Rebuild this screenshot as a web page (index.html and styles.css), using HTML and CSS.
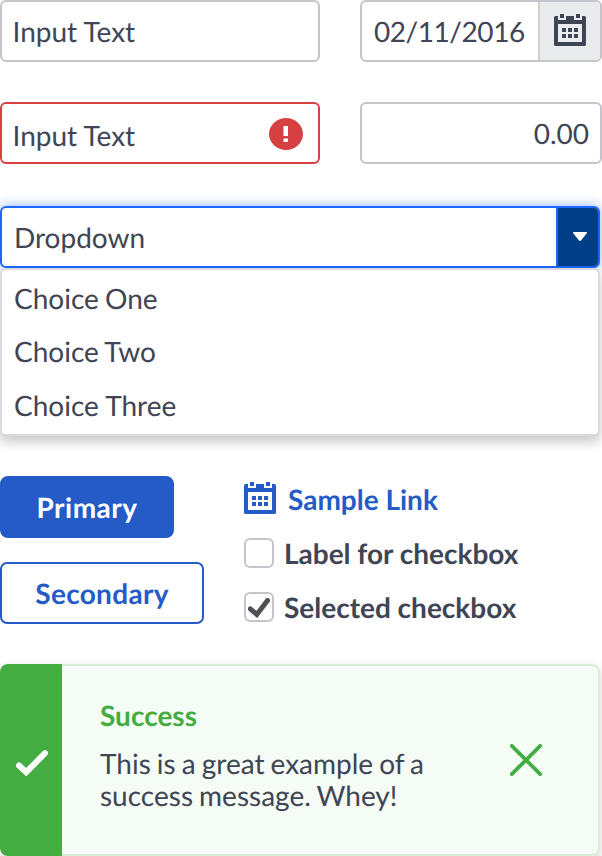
FILE: index.html
```html
<!DOCTYPE html>
<html lang="en">
<head>
<meta charset="utf-8">
<title>Form components</title>
<link rel="stylesheet" href="styles.css">
</head>
<body>
<svg class="defs" width="0" height="0" aria-hidden="true">
  <symbol id="calendar" viewBox="0 0 32 32">
    <path fill="currentColor" fill-rule="evenodd" d="M1.5 2H4V6H12V2H20V6H28V2H30.5Q32 2 32 3.5V30.500Q32 32 30.500 32H1.500Q0 32 0 30.500V3.500Q0 2 1.500 2ZM4 10V28H28V10ZM6 0H10V4H6ZM22 0H26V4H22ZM8 14H12V18H8ZM14 14H18V18H14ZM20 14H24V18H20ZM8 20H12V24H8ZM14 20H18V24H14ZM20 20H24V24H20Z"/>
  </symbol>
</svg>
<main class="page">
  <section class="fields">
    <div class="field">Input Text</div>
    <div class="field date">
      <span class="date-value">02/11/2016</span>
      <span class="date-button"><svg class="icon"><use href="#calendar"/></svg></span>
    </div>
    <div class="field error">
      <span class="error-value">Input Text</span>
      <svg class="error-icon" width="34" height="32" viewBox="0 0 34 32"><ellipse cx="17" cy="16" rx="17" ry="16" fill="#d64042"/><path fill="#fff" d="M14.500 8H19V18H14.500ZM14.500 20.500H19V24H14.500Z"/></svg>
    </div>
    <div class="field amount">0.00</div>
  </section>

  <section class="dropdown">
    <div class="select">
      <span class="select-value">Dropdown</span>
      <span class="select-button"><svg width="14" height="9" viewBox="0 0 14 9"><path fill="#fff" d="M0 0H14V1L8 8.500Q7 9.400 6 8.500L0 1Z"/></svg></span>
    </div>
    <ul class="menu">
      <li>Choice One</li>
      <li>Choice Two</li>
      <li>Choice Three</li>
    </ul>
  </section>

  <section class="actions">
    <div class="buttons">
      <div class="button primary">Primary</div>
      <div class="button secondary">Secondary</div>
    </div>
    <div class="options">
      <a class="link"><svg class="icon"><use href="#calendar"/></svg><span>Sample Link</span></a>
      <div class="option"><span class="checkbox"></span>Label for checkbox</div>
      <div class="option"><span class="checkbox"><svg width="22" height="20" viewBox="0 0 22 20"><path d="M2.300 10.800 8.800 16.500 19.500 2.500" fill="none" stroke="#4f5055" stroke-width="5" stroke-linecap="round"/></svg></span>Selected checkbox</div>
    </div>
  </section>

  <section class="alert">
    <div class="alert-mark"><svg width="32" height="26" viewBox="0 0 32 26"><path d="M3 15.500 10.200 22.200 29 3.200" fill="none" stroke="#fff" stroke-width="6" stroke-linecap="round"/></svg></div>
    <div class="alert-body">
      <div class="alert-text">
        <h2>Success</h2>
        <p>This is a great example of a<br>success message. Whey!</p>
      </div>
      <svg class="close" width="32" height="32" viewBox="0 0 32 32"><path d="M1.800 1.800 30.200 30.200M30.200 1.800 1.800 30.200" stroke="#43ad41" stroke-width="3.800" stroke-linecap="round"/></svg>
    </div>
  </section>
</main>
</body>
</html>
```
FILE: styles.css
```css
* { box-sizing: border-box; }

body {
  margin: 0;
  background: #fff;
  color: #3f4554;
  font: 28px/34px Lato, "Liberation Sans", sans-serif;
  text-rendering: geometricPrecision;
  overflow: hidden;
}

.defs { display: none; }
svg { display: block; flex: none; }
.icon { width: 32px; height: 32px; }

.page {
  width: 602px;
  height: 856px;
  overflow: hidden;
}

.fields {
  display: grid;
  grid-template-columns: 320px 242px;
  column-gap: 40px;
  row-gap: 40px;
}

.field {
  display: flex;
  align-items: center;
  height: 62px;
  padding: 0 11px 0 10.500px;
  border: 2px solid #c5c4ca;
  border-radius: 6px;
}

.date { padding: 0; align-items: stretch; }
.date-value { flex: 1; padding-left: 12px; line-height: 58px; letter-spacing: -0.450px; }
.date-button {
  width: 62px;
  padding: 12px 0 0 14px;
  border-left: 2px solid #d0d0d2;
  border-radius: 0 4px 4px 0;
  background: #eaebed;
}

.error { justify-content: space-between; padding-right: 15px; border-color: #d64042; }
.error-value { padding-top: 4px; }
.error-icon { margin-top: 2px; }
.amount { justify-content: flex-end; }

.dropdown { width: 600px; margin-top: 42px; }
.select {
  position: relative;
  display: flex;
  height: 62px;
  border: 2px solid #1b66fb;
  border-radius: 6px;
  background: #fff;
  box-shadow: 0 0 12px rgba(27, 102, 251, 0.5);
}
.select-value { flex: 1; padding-left: 12px; line-height: 58px; }
.select-button {
  width: 42px;
  padding: 24px 0 0 15px;
  border-left: 2px solid #1b66fb;
  border-radius: 0 4px 4px 0;
  background: #003f87;
}
.menu {
  position: relative;
  height: 168px;
  margin: 0;
  padding: 2px 12px;
  border: 2px solid #d9dadd;
  border-radius: 6px;
  background: #fff;
  box-shadow: 0 6px 12px rgba(0, 0, 0, 0.22);
  list-style: none;
}
.menu li { height: 53.400px; line-height: 53.400px; word-spacing: -1px; }
.menu li:last-child { word-spacing: 0; }

.actions { display: flex; gap: 40px; margin-top: 40px; font-weight: 700; }
.buttons { width: 204px; }
.button {
  height: 62px;
  border: 2px solid #245bc7;
  border-radius: 8px;
  line-height: 58px;
  text-align: center;
  letter-spacing: 0.300px;
}
.primary { width: 174px; background: #245bc7; color: #fff; letter-spacing: 0.500px; }
.secondary { margin-top: 24px; border-radius: 7px; color: #245bc7; }

.options { padding-top: 6px; }
.link { display: flex; gap: 12px; height: 34px; color: #245bc7; }
.option { display: flex; align-items: center; gap: 10px; height: 34px; margin-top: 20px; }
.checkbox {
  width: 30px;
  height: 30px;
  padding: 4px 0 0 2px;
  border: 2px solid #c5c4ca;
  border-radius: 6px;
}

.alert {
  display: flex;
  width: 600px;
  height: 192px;
  margin-top: 40px;
  border-radius: 8px;
  box-shadow: 0 4px 12px rgba(0, 0, 0, 0.18);
}
.alert-mark {
  width: 62px;
  padding: 86px 0 0 16px;
  border-radius: 8px 0 0 8px;
  background: #43ad41;
}
.alert-body {
  display: flex;
  flex: 1;
  justify-content: space-between;
  padding: 32px 56px 0 38px;
  border: 2px solid #d6edd7;
  border-left: 0;
  border-radius: 0 8px 8px 0;
  background: #f5fcf6;
}
.alert h2 { margin: 0 0 15px; color: #43ad41; font-size: 28px; line-height: 34px; }
.alert p { margin: 0; line-height: 32px; word-spacing: -1.100px; }
.close { margin-top: 46px; }
```
